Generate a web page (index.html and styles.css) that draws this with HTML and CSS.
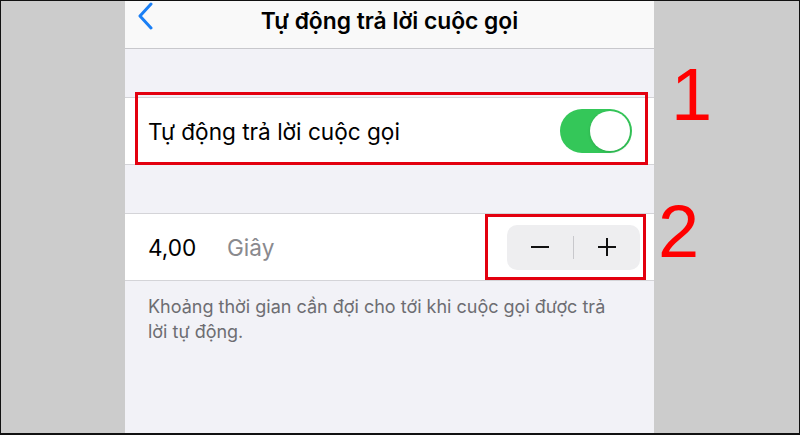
FILE: index.html
```html
<!DOCTYPE html>
<html lang="vi">
<head>
<meta charset="utf-8">
<link rel="stylesheet" href="styles.css">
</head>
<body>
<div class="frame">
  <div class="side side-left"></div>
  <div class="phone">
    <div class="nav">
      <svg class="back" width="16" height="28" viewBox="0 0 16 28"><path d="M14 2 L3 14 L14 26" fill="none" stroke="#1a7ff5" stroke-width="3" stroke-linecap="round" stroke-linejoin="round"/></svg>
      <div class="title">Tự động trả lời cuộc gọi</div>
    </div>
    <div class="group group-first">
      <div class="row">
        <span class="label">Tự động trả lời cuộc gọi</span>
        <span class="toggle"><span class="knob"></span></span>
      </div>
      <div class="mark mark-1"></div>
    </div>
    <div class="group">
      <div class="row">
        <span class="value">4,00</span>
        <span class="unit">Giây</span>
        <span class="stepper">
          <span class="step">
            <svg width="20" height="20" viewBox="0 0 20 20"><path d="M1 10 H19" stroke="#111" stroke-width="2"/></svg>
          </span>
          <span class="divider"></span>
          <span class="step">
            <svg width="20" height="20" viewBox="0 0 20 20"><path d="M1 10 H19 M10 1 V19" stroke="#111" stroke-width="2"/></svg>
          </span>
        </span>
      </div>
      <div class="mark mark-2"></div>
    </div>
    <p class="footer">Khoảng thời gian cần đợi cho tới khi cuộc gọi được trả lời tự động.</p>
  </div>
  <div class="side side-right">
    <div class="num num-1">1</div>
    <div class="num num-2">2</div>
  </div>
</div>
</body>
</html>
```

FILE: styles.css
```css
html, body {
  margin: 0;
  padding: 0;
}
body {
  width: 800px;
  height: 435px;
  overflow: hidden;
  font-family: "Inter", "Liberation Sans", sans-serif;
}
.frame {
  box-sizing: border-box;
  width: 800px;
  height: 435px;
  border: 1px solid #111;
  border-bottom-width: 2px;
  display: flex;
  background: #cccccc;
}
.side-left {
  width: 124px;
  flex: none;
}
.phone {
  width: 529px;
  flex: none;
  background: #f2f2f7;
  display: flex;
  flex-direction: column;
}
.side-right {
  flex: 1;
  display: flex;
  flex-direction: column;
  padding-left: 16px;
  font-family: "Liberation Sans", Arial, sans-serif;
  color: #ff0000;
}
.num {
  font-size: 74px;
  line-height: 1;
}
.num-1 {
  margin-top: 57px;
  padding-left: 1px;
}
.num-2 {
  margin-top: 63px;
  margin-left: -12px;
}
.nav {
  height: 47px;
  border-bottom: 1px solid #c8c8cc;
  background: #f9f9f9;
  display: flex;
  align-items: center;
  position: relative;
}
.back {
  position: absolute;
  left: 12px;
  top: 1px;
}
.title {
  flex: 1;
  text-align: center;
  font-size: 22.8px;
  font-weight: 600;
  color: #000;
  margin-top: -9px;
}
.group {
  margin-top: 48px;
  background: #fff;
  border-top: 1px solid #d4d4d8;
  border-bottom: 1px solid #d4d4d8;
  position: relative;
}
.row {
  height: 66px;
  display: flex;
  align-items: center;
  padding-left: 23px;
  padding-right: 14px;
}
.label {
  flex: 1;
  font-size: 22.6px;
  color: #000;
}
.toggle {
  width: 72px;
  height: 44px;
  border-radius: 22px;
  background: #34c759;
  position: relative;
  margin-right: 8px;
}
.knob {
  position: absolute;
  right: 2px;
  top: 2px;
  width: 40px;
  height: 40px;
  border-radius: 50%;
  background: #fff;
  box-shadow: 0 1px 3px rgba(0,0,0,0.15);
}
.value {
  font-size: 22.6px;
  color: #000;
  width: 79px;
}
.unit {
  flex: 1;
  font-size: 22.6px;
  color: #8a8a8e;
}
.stepper {
  width: 133px;
  height: 45px;
  border-radius: 10px;
  background: #eeeef0;
  display: flex;
  align-items: center;
}
.step {
  flex: 1;
  display: flex;
  justify-content: center;
  align-items: center;
}
.divider {
  width: 1px;
  height: 23px;
  background: #c8c8cc;
}
.mark {
  position: absolute;
  border: 3px solid #e3000f;
  box-sizing: border-box;
}
.mark-1 {
  left: 10px;
  right: 6px;
  top: -6px;
  bottom: -1px;
}
.mark-2 {
  left: 360px;
  right: 8px;
  top: 0px;
  bottom: 0px;
}
.footer {
  margin: 13px 0 0;
  padding: 0 38px 0 23px;
  font-size: 18px;
  line-height: 25px;
  color: #6d6d72;
}
```
